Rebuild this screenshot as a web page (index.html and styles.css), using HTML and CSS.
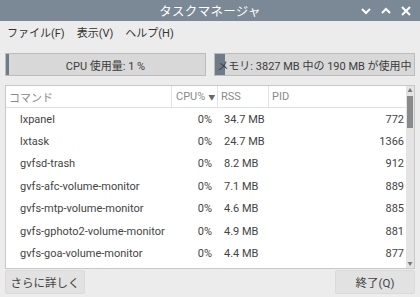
FILE: index.html
```html
<!DOCTYPE html>
<html lang="ja">
<head>
  <meta charset="UTF-8" />
  <title>タスクマネージャ</title>
  <link rel="stylesheet" href="styles.css">
</head>
<body>
  <div class="window">
    <div class="titlebar">
      <span></span>
      <span class="title">タスクマネージャ</span>
      <div class="controls">
        <svg width="12" height="12" viewBox="0 0 12 12"><path d="M2 4 L6 8 L10 4" /></svg>
        <svg width="12" height="12" viewBox="0 0 12 12"><path d="M2 8 L6 4 L10 8" /></svg>
        <svg width="12" height="12" viewBox="0 0 12 12"><path d="M2 2 L10 10 M10 2 L2 10" /></svg>
      </div>
    </div>

    <div class="menubar">
      <span>ファイル(F)</span>
      <span>表示(V)</span>
      <span>ヘルプ(H)</span>
    </div>

    <div class="meters">
      <div class="meter">
        <div class="fill" style="width: 1%"></div>
        <span class="meter-text">CPU 使用量: 1 %</span>
      </div>
      <div class="meter">
        <div class="fill" style="width: 5%"></div>
        <span class="meter-text">メモリ: 3827 MB 中の 190 MB が使用中</span>
      </div>
    </div>

    <div class="table">
      <div class="rows">
        <div class="row head">
          <div class="c-cmd">コマンド</div>
          <div class="c-cpu">CPU% <span class="sort">▼</span></div>
          <div class="c-rss">RSS</div>
          <div class="c-pid">PID</div>
        </div>
        <div id="procList"></div>
      </div>
      <div class="scrollbar">
        <span class="arrow">▲</span>
        <div class="track"><div class="thumb"></div></div>
        <span class="arrow">▼</span>
      </div>
    </div>

    <div class="buttons">
      <button>さらに詳しく</button>
      <button>終了(Q)</button>
    </div>
  </div>

  <script>
    const procs = [
      ['lxpanel', '0%', '34.7 MB', 772],
      ['lxtask', '0%', '24.7 MB', 1366],
      ['gvfsd-trash', '0%', '8.2 MB', 912],
      ['gvfs-afc-volume-monitor', '0%', '7.1 MB', 889],
      ['gvfs-mtp-volume-monitor', '0%', '4.6 MB', 885],
      ['gvfs-gphoto2-volume-monitor', '0%', '4.9 MB', 881],
      ['gvfs-goa-volume-monitor', '0%', '4.4 MB', 877]
    ];
    const list = document.getElementById('procList');
    procs.forEach(p => {
      const row = document.createElement('div');
      row.classList.add('row');
      ['c-cmd', 'c-cpu', 'c-rss', 'c-pid'].forEach((cls, i) => {
        const cell = document.createElement('div');
        cell.classList.add(cls);
        cell.textContent = p[i];
        row.appendChild(cell);
      });
      list.appendChild(row);
    });
  </script>
</body>
</html>
```

FILE: styles.css
```css
body {
  margin: 0;
  padding: 0;
  font-family: Roboto, "Noto Sans CJK JP", sans-serif;
  font-size: 11px;
  color: #444;
  background: #ececec;
}

.window {
  width: 420px;
  height: 297px;
  display: flex;
  flex-direction: column;
  overflow: hidden;
}

.titlebar {
  height: 21px;
  background: #7b8895;
  display: grid;
  grid-template-columns: 1fr auto 1fr;
  align-items: center;
  color: #fff;
}

.title {
  font-size: 12.5px;
  letter-spacing: 0.3px;
}

.controls {
  display: flex;
  justify-content: flex-end;
  gap: 8px;
  padding-right: 8px;
}

.controls svg path {
  fill: none;
  stroke: #fff;
  stroke-width: 2;
}

.menubar {
  height: 22px;
  display: flex;
  align-items: center;
  gap: 12px;
  padding-left: 7px;
  font-size: 11px;
  color: #333;
}

.meters {
  display: grid;
  grid-template-columns: 1fr 1fr;
  gap: 8px;
  padding: 0 5px;
  margin-top: 10px;
}

.meter {
  position: relative;
  height: 21px;
  border: 1px solid #bcbcbc;
  background: #d8d8d8;
  display: flex;
  align-items: center;
  justify-content: center;
  overflow: hidden;
}

.fill {
  position: absolute;
  top: 0;
  left: 0;
  bottom: 0;
  min-width: 3px;
  background: #6e7b88;
}

.meter-text {
  position: relative;
  white-space: nowrap;
  color: #3c3c3c;
  font-size: 11px;
}

.table {
  margin: 9px 5px 0;
  height: 182px;
  border: 1px solid #c8c8c8;
  background: #fff;
  display: flex;
}

.rows {
  flex: 1;
  overflow: hidden;
}

.row {
  display: grid;
  grid-template-columns: 164px 47px 51px 1fr;
  height: 22.4px;
  align-items: center;
}

.row.head {
  height: 21px;
  border-bottom: 1px solid #e0e0e0;
  color: #8a8a8a;
}

.c-cmd {
  padding-left: 14px;
  white-space: nowrap;
}

.c-cpu {
  text-align: right;
  padding-right: 5px;
}

.c-rss {
  padding-left: 7px;
  white-space: nowrap;
}

.c-pid {
  text-align: right;
  padding-right: 2px;
}

.head > div {
  height: 100%;
  display: flex;
  align-items: center;
}

.head .c-cmd {
  padding-left: 3px;
}

.head .c-cpu {
  justify-content: flex-start;
  border-left: 1px solid #e2e2e2;
  padding-left: 4px;
  margin-left: 1px;
}

.head .c-rss {
  border-left: 1px solid #e2e2e2;
  padding-left: 3px;
}

.head .c-pid {
  border-left: 1px solid #e2e2e2;
  padding-left: 3px;
  justify-content: flex-start;
}

.sort {
  font-size: 7px;
  margin-left: 3px;
  color: #666;
}

.scrollbar {
  width: 8px;
  background: #e4e4e4;
  display: flex;
  flex-direction: column;
  align-items: center;
}

.arrow {
  font-size: 5px;
  height: 9px;
  line-height: 9px;
  color: #777;
}

.track {
  flex: 1;
  width: 100%;
}

.thumb {
  margin: 1px auto 0;
  width: 6px;
  height: 32px;
  background: #8a8a8a;
}

.buttons {
  display: flex;
  justify-content: space-between;
  padding: 0 5px;
  margin-top: 1px;
}

button {
  font-family: Roboto, "Noto Sans CJK JP", sans-serif;
  font-size: 11.5px;
  color: #444;
  background: #e2e2e2;
  border: 1px solid #dadada;
  border-radius: 2px;
  height: 24px;
  width: 80px;
  padding: 0;
  white-space: nowrap;
}
```
